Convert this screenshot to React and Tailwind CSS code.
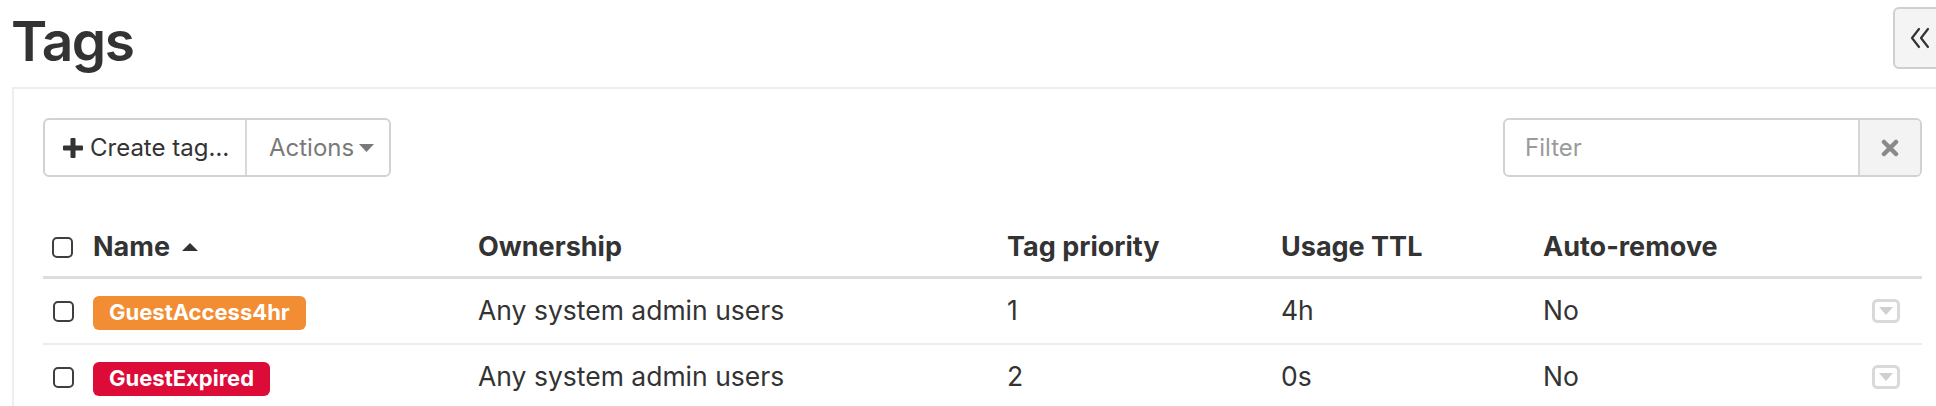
import React from "react";

function Checkbox() {
  return <div className="w-[21px] h-[21px] rounded-[5px] border-2 border-[#3f3f3f] bg-white" />;
}

function RowMenu() {
  return (
    <svg width="28" height="24" viewBox="0 0 28 24">
      <rect x="1.5" y="1.5" width="25" height="21" rx="4" fill="none" stroke="#d9d9d9" strokeWidth="3" />
      <polygon points="7,8 21,8 14,16" fill="#d0d0d0" />
    </svg>
  );
}

function Badge({ color, children }) {
  return (
    <span
      className={`inline-flex h-[34px] items-center px-[16px] rounded-[6px] text-white font-bold text-[22px] ${color}`}
    >
      {children}
    </span>
  );
}

const rows = [
  { name: "GuestAccess4hr", color: "bg-[#f28d33]", owner: "Any system admin users", prio: "1", ttl: "4h", auto: "No" },
  { name: "GuestExpired", color: "bg-[#dc0b37]", owner: "Any system admin users", prio: "2", ttl: "0s", auto: "No" },
];

const grid = "grid grid-cols-[50px_385px_529px_274px_262px_1fr] items-center";

export default function App() {
  return (
    <div
      className="w-[1936px] h-[406px] overflow-hidden bg-white text-[#333]"
      style={{ fontFamily: "Inter, 'Liberation Sans', sans-serif" }}
    >
      <div className="flex items-start justify-between -mr-[17px]">
        <h1 className="mt-[13px] ml-[11px] text-[55px] leading-[56px] font-semibold tracking-[-1.5px] text-[#333]">
          Tags
        </h1>
        <button className="mt-[7px] h-[62px] w-[60px] flex items-center pl-[15px] border-2 border-[#cfcfcf] rounded-[6px] bg-[#f4f4f4]">
          <svg width="20" height="24" viewBox="0 0 20 24" fill="none" stroke="#333" strokeWidth="2.2" strokeLinecap="round" strokeLinejoin="round">
            <path d="M9 3 L2 12 L9 21" />
            <path d="M18 3 L11 12 L18 21" />
          </svg>
        </button>
      </div>

      <div className="mt-[18px] ml-[12px] -mr-[17px] border-l-2 border-t-2 border-r-2 border-[#eeeeee] pt-[29px] px-[29px]">
        <div className="flex items-center justify-between">
          <div className="flex h-[59px] border-2 border-[#d2d2d2] rounded-[6px] text-[24px]">
            <div className="w-[202px] flex items-center pl-[18px] gap-[7px] text-[#333] border-r-2 border-[#d9d9d9]">
              <svg width="20" height="20" viewBox="0 0 20 20" fill="#333">
                <rect x="7.5" y="0" width="5" height="20" rx="1" />
                <rect x="0" y="7.5" width="20" height="5" rx="1" />
              </svg>
              <span>Create tag…</span>
            </div>
            <div className="w-[142px] flex items-center pl-[22px] gap-[5px] text-[#7a7a7a]">
              <span>Actions</span>
              <svg width="15" height="8" viewBox="0 0 15 8">
                <polygon points="0,0 15,0 7.5,8" fill="#7a7a7a" />
              </svg>
            </div>
          </div>

          <div className="flex h-[59px] w-[419px] border-2 border-[#d2d2d2] rounded-[6px] text-[24px]">
            <div className="flex-1 flex items-center pl-[20px] text-[#9a9a9a]">Filter</div>
            <div className="w-[62px] flex items-center justify-center bg-[#f3f3f3] border-l-2 border-[#d6d6d6] rounded-r-[4px]">
              <svg width="18" height="18" viewBox="0 0 18 18" stroke="#8a8a8a" strokeWidth="4.5" strokeLinecap="round">
                <path d="M3 3 L15 15" />
                <path d="M15 3 L3 15" />
              </svg>
            </div>
          </div>
        </div>

        <div className="mt-[41px] w-[1879px]">
          <div className={`${grid} h-[61px] border-b-[3px] border-[#dddddd] text-[27px] font-bold`}>
            <div className="pl-[9px]">
              <Checkbox />
            </div>
            <div className="flex items-center gap-[12px]">
              <span>Name</span>
              <svg width="16" height="8" viewBox="0 0 16 8">
                <polygon points="0,8 16,8 8,0" fill="#333" />
              </svg>
            </div>
            <div>Ownership</div>
            <div>Tag priority</div>
            <div>Usage TTL</div>
            <div>Auto-remove</div>
          </div>

          {rows.map((r) => (
            <div key={r.name} className={`${grid} h-[66px] border-b-2 border-[#ececec] text-[26.5px]`}>
              <div className="pl-[10px]">
                <Checkbox />
              </div>
              <div>
                <Badge color={r.color}>{r.name}</Badge>
              </div>
              <div>{r.owner}</div>
              <div>{r.prio}</div>
              <div>{r.ttl}</div>
              <div className="flex items-center justify-between pr-[22px]">
                <span>{r.auto}</span>
                <RowMenu />
              </div>
            </div>
          ))}
        </div>
      </div>
    </div>
  );
}
